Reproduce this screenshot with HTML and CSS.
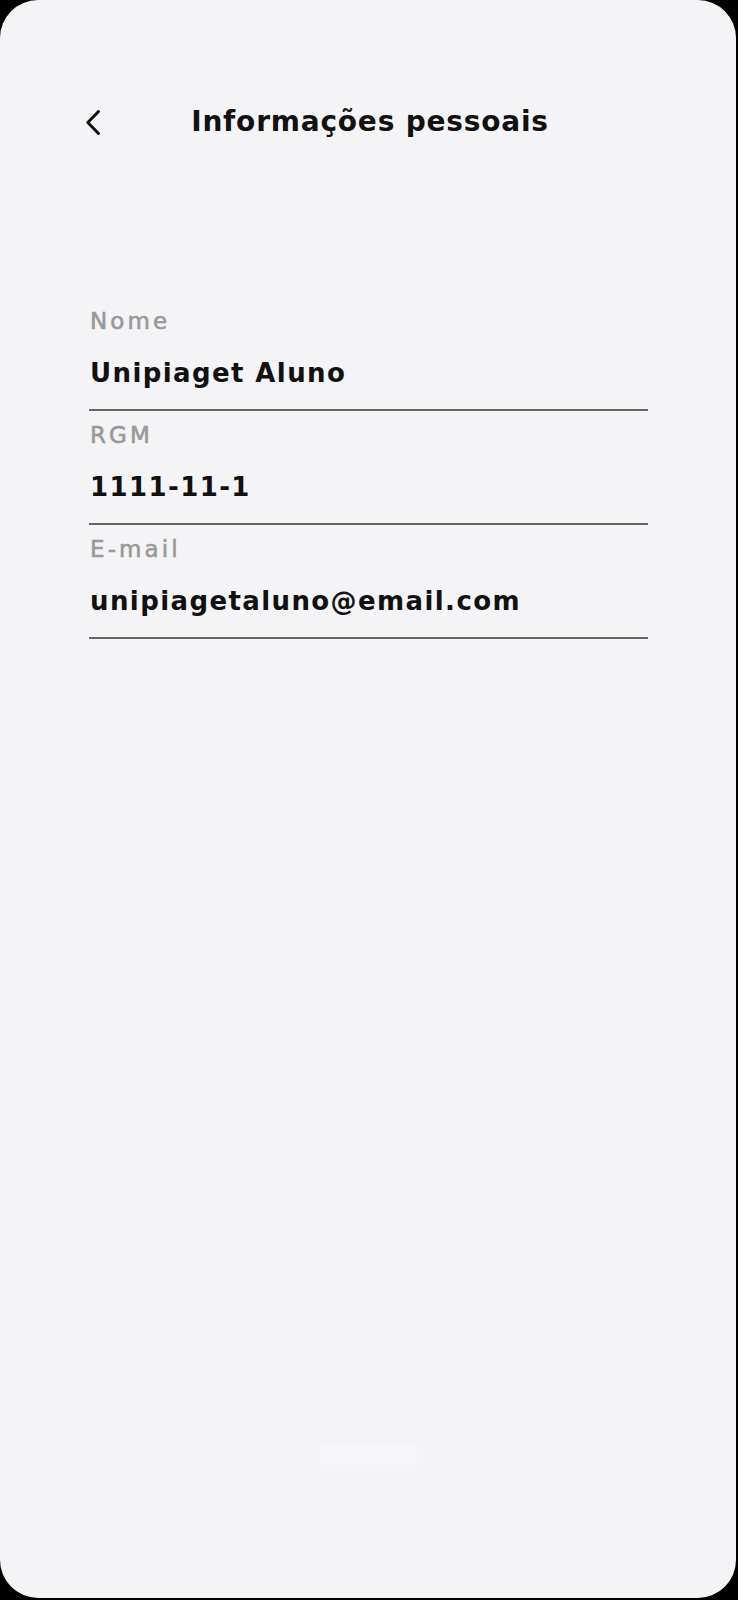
FILE: index.html
```html
<!DOCTYPE html>
<html lang="pt-BR">
<head>
<meta charset="utf-8">
<title>Informações pessoais</title>
<link rel="stylesheet" href="styles.css">
</head>
<body>
<div class="screen">
  <header class="topbar">
    <button class="back" aria-label="Voltar">
      <svg width="16" height="27" viewBox="0 0 16 27" aria-hidden="true">
        <polyline points="13.5,2.5 2.8,13.5 13.5,24.5" fill="none" stroke="#111" stroke-width="3" stroke-linecap="round" stroke-linejoin="round"/>
      </svg>
    </button>
    <h1 class="title">Informações pessoais</h1>
    <span class="spacer"></span>
  </header>

  <main class="fields">
    <div class="field">
      <div class="label">Nome</div>
      <div class="value">Unipiaget Aluno</div>
    </div>
    <div class="field">
      <div class="label">RGM</div>
      <div class="value">1111-11-1</div>
    </div>
    <div class="field">
      <div class="label">E-mail</div>
      <div class="value">unipiagetaluno@email.com</div>
    </div>
  </main>

  <footer class="footer">
    <div class="ghost-btn"></div>
  </footer>
</div>
</body>
</html>
```

FILE: styles.css
```css
* {
  box-sizing: border-box;
}

html, body {
  margin: 0;
  padding: 0;
  background: #000;
}

body {
  width: 738px;
  height: 1600px;
  overflow: hidden;
  font-family: "DejaVu Sans", "Liberation Sans", sans-serif;
}

.screen {
  width: 736px;
  height: 1598px;
  background: #f4f4f6;
  border-radius: 38px;
  display: flex;
  flex-direction: column;
  overflow: hidden;
}

.topbar {
  margin-top: 102px;
  height: 40px;
  display: grid;
  grid-template-columns: 1fr auto 1fr;
  align-items: center;
}

.back {
  justify-self: start;
  margin-left: 85px;
  padding: 0;
  border: 0;
  background: none;
  width: 16px;
  height: 27px;
  display: flex;
}

.title {
  margin: 0 0 0 4px;
  font-size: 28px;
  line-height: 40px;
  font-weight: 700;
  color: #111;
  letter-spacing: 0.8px;
}

.fields {
  margin-top: 155px;
  padding: 0 88px 0 89px;
  display: flex;
  flex-direction: column;
}

.field {
  padding-top: 9px;
  padding-bottom: 18px;
  border-bottom: 2px solid #666;
  display: flex;
  flex-direction: column;
  gap: 19px;
}

.label {
  padding-left: 1px;
  font-size: 23px;
  line-height: 30px;
  color: #999;
  letter-spacing: 3.1px;
  -webkit-text-stroke: 0.6px #999;
}

.value {
  padding-left: 1px;
  font-size: 26px;
  line-height: 36px;
  font-weight: 700;
  color: #111;
  letter-spacing: 1.4px;
}

.footer {
  margin-top: auto;
  margin-bottom: 132px;
  display: flex;
  justify-content: center;
}

.ghost-btn {
  width: 97px;
  height: 23px;
  background: #f6f6f8;
  border-radius: 2px;
}
```
